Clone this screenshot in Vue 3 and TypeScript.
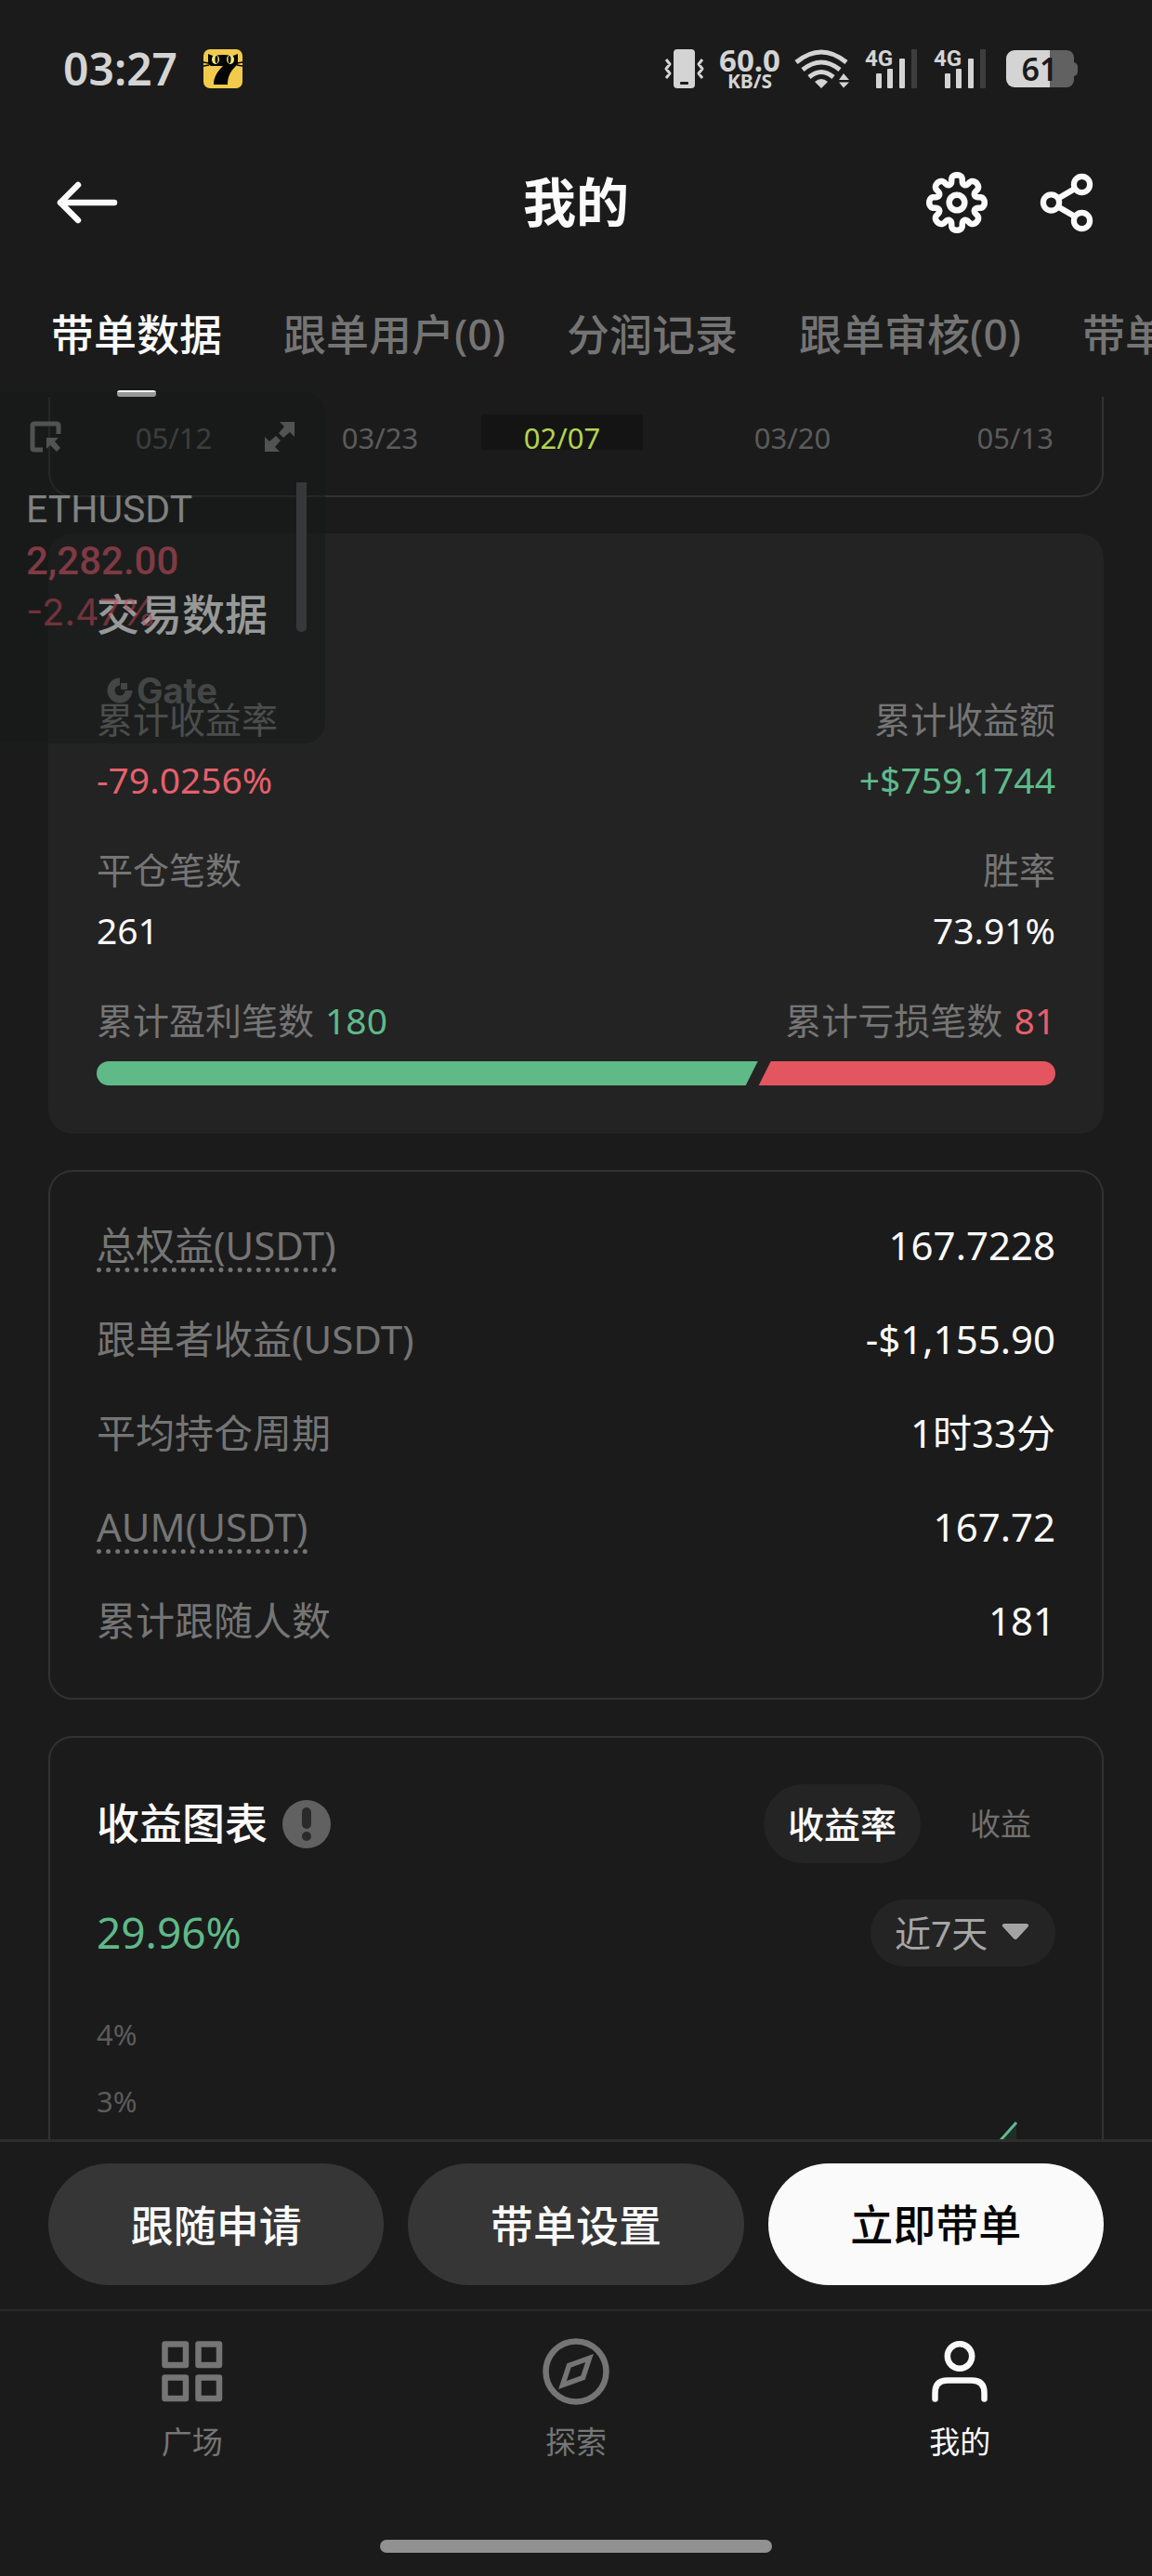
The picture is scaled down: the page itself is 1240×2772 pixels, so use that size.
<script setup lang="ts">
import { ref } from 'vue'

interface AxisDate { label: string; share: number; active?: boolean }
interface Detail { label: string; value: string; hint?: boolean }

const tabs: string[] = ['带单数据', '跟单用户(0)', '分润记录', '跟单审核(0)', '带单设置']
const activeTab = ref(0)

const dates: AxisDate[] = [
  { label: '05/12', share: 266 },
  { label: '03/23', share: 178 },
  { label: '02/07', share: 214, active: true },
  { label: '03/20', share: 282 },
  { label: '05/13', share: 192 },
]
const dateColumns = dates.map((d) => `${d.share}fr`).join(' ')

const details: Detail[] = [
  { label: '总权益(USDT)', value: '167.7228', hint: true },
  { label: '跟单者收益(USDT)', value: '-$1,155.90' },
  { label: '平均持仓周期', value: '1时33分' },
  { label: 'AUM(USDT)', value: '167.72', hint: true },
  { label: '累计跟随人数', value: '181' },
]

const levels: string[] = ['4%', '3%']
const metric = ref<'rate' | 'amount'>('rate')
const range = ref('7')

// Eight rounded teeth: the radius swings between the tips and the notches,
// and the angle is pushed outwards near a tip so that the teeth stay broad.
function gearPath(cx: number, cy: number, mid: number, swing: number): string {
  const steps = 160
  const points: string[] = []
  for (let i = 0; i < steps; i++) {
    const a = (i / steps) * Math.PI * 2
    const t = a + 0.035 * Math.sin(8 * a) + 0.04 * Math.sin(16 * a)
    const r = mid + swing * Math.cos(8 * a)
    points.push(`${(cx + r * Math.sin(t)).toFixed(2)} ${(cy - r * Math.cos(t)).toFixed(2)}`)
  }
  return `M${points.join('L')}Z`
}
const gear = gearPath(35, 35, 25.2, 4.6)
</script>

<template>
  <div class="app">
    <div class="status">
      <div class="status-left">
        <span class="clock">03:27</span>
        <svg class="cat" viewBox="0 0 42 42" aria-hidden="true">
          <rect width="42" height="42" rx="7" fill="#f2cb4d" />
          <path d="M5 5l5 2q11-2 22 0l5-2v11l-3 3c-6 6-8 12-8 19H11c0-8 4-14 10-20H8q-3-1-3-5z" fill="#050505" />
          <path d="M0 14l6 1M0 18l6-1M42 14l-6 1M42 18l-6-1" stroke="#050505" stroke-width="1.500" />
          <ellipse cx="13" cy="11" rx="4" ry="5" fill="#f1ea7a" />
          <ellipse cx="29" cy="11" rx="4" ry="5" fill="#f1ea7a" />
          <ellipse cx="14" cy="11" rx="1.500" ry="4" fill="#050505" />
          <ellipse cx="28" cy="11" rx="1.500" ry="4" fill="#050505" />
        </svg>
      </div>
      <div class="status-right">
        <svg class="vibrate" viewBox="0 0 43 42" aria-hidden="true">
          <rect x="10" width="23" height="42" rx="4" fill="#d4d4d4" />
          <rect x="17" y="35" width="9" height="3" rx="1" fill="#1b1b1b" />
          <path d="M2 11l4 5-4 5 4 5-4 5M41 11l-4 5 4 5-4 5 4 5" fill="none" stroke="#d4d4d4" stroke-width="3" stroke-linejoin="round" />
        </svg>
        <div class="speed"><b>60.0</b><small>KB/S</small></div>
        <svg class="wifi" viewBox="0 0 60 42" aria-hidden="true">
          <g fill="none" stroke="#d4d4d4" stroke-width="5">
            <path d="M2 14Q29-8 56 14" />
            <path d="M9 22Q29 6 49 22" />
            <path d="M16 30Q29 19 42 30" />
          </g>
          <path d="M22 35q7-6 14 0l-7 7z" fill="#d4d4d4" />
          <path d="M48 33l5-7 6 7zM48 35.500h11l-6 6z" fill="#d4d4d4" />
        </svg>
        <svg v-for="n in 2" :key="n" class="signal" viewBox="0 0 58 44" role="img" aria-label="4G">
          <text x="0" y="19" class="net">4G</text>
          <g fill="#d4d4d4">
            <rect x="12" y="27" width="6" height="16" rx="1" />
            <rect x="24" y="22" width="6" height="21" rx="1" />
            <rect x="37" y="11" width="6" height="32" rx="1" />
          </g>
          <rect x="50" y="1" width="6" height="42" fill="#3d3d3d" />
        </svg>
        <svg class="battery" viewBox="0 0 77 40" aria-hidden="true">
          <path d="M47 0h18a8 8 0 0 1 8 8v5q4 1 4 5v5q0 4-4 5v4a8 8 0 0 1-8 8H47z" fill="#616161" />
          <path d="M47 0H9a9 9 0 0 0-9 9v22a9 9 0 0 0 9 9h38z" fill="#d4d4d4" />
          <text x="36" y="33" text-anchor="middle" class="level">61</text>
        </svg>
      </div>
    </div>

    <header class="bar">
      <button class="icon-btn" aria-label="返回">
        <svg viewBox="0 0 70 70"><path d="M27 16L8 35l19 19M8 35h58" fill="none" stroke="#fafafa" stroke-width="6.500" stroke-linecap="round" stroke-linejoin="round" /></svg>
      </button>
      <h1>我的</h1>
      <div class="bar-actions">
        <button class="icon-btn" aria-label="设置">
          <svg viewBox="0 0 70 70" fill="none" stroke="#fafafa" stroke-width="6.500">
            <path :d="gear" stroke-linejoin="round" />
            <circle cx="35" cy="35" r="8.300" />
          </svg>
        </button>
        <button class="icon-btn" aria-label="分享">
          <svg viewBox="0 0 70 70" fill="none" stroke="#fafafa" stroke-width="6.200">
            <circle cx="18.500" cy="35" r="8.600" />
            <circle cx="51.500" cy="15.500" r="8.600" />
            <circle cx="51.500" cy="54.500" r="8.600" />
            <path d="M26 30.500l18-10.500M26 39.500L44 50" />
          </svg>
        </button>
      </div>
    </header>

    <nav class="tabs">
      <button v-for="(tab, i) in tabs" :key="tab" class="tab" :class="{ active: i === activeTab }" @click="activeTab = i">
        {{ tab }}
      </button>
    </nav>

    <main>
      <section class="card outlined dates-card">
        <div class="dates" :style="{ gridTemplateColumns: dateColumns }">
          <span v-for="d in dates" :key="d.label" class="date" :class="{ on: d.active }"><i>{{ d.label }}</i></span>
        </div>
      </section>

      <section class="card filled">
        <h2>交易数据</h2>
        <div class="pair">
          <div><p class="label">累计收益率</p><p class="value down">-79.0256%</p></div>
          <div><p class="label">累计收益额</p><p class="value up">+$759.1744</p></div>
        </div>
        <div class="pair">
          <div><p class="label">平仓笔数</p><p class="value">261</p></div>
          <div><p class="label">胜率</p><p class="value">73.91%</p></div>
        </div>
        <div class="pair tally">
          <p class="label">累计盈利笔数<span class="count up">180</span></p>
          <p class="label">累计亏损笔数<span class="count down">81</span></p>
        </div>
        <div class="ratio"><span class="win"></span><span class="loss"></span></div>
      </section>

      <section class="card outlined details-card">
        <dl>
          <div v-for="d in details" :key="d.label" class="detail">
            <dt><span :class="{ hint: d.hint }">{{ d.label }}</span></dt>
            <dd>{{ d.value }}</dd>
          </div>
        </dl>
      </section>

      <section class="card outlined">
        <div class="chart-head">
          <h2>收益图表</h2>
          <button class="info" aria-label="说明">
            <svg viewBox="0 0 52 52">
              <circle cx="26" cy="26" r="26" fill="#616161" />
              <rect x="21" y="8" width="10" height="23" rx="5" fill="#2a2a2a" />
              <circle cx="26" cy="39" r="5" fill="#2a2a2a" />
            </svg>
          </button>
          <div class="metrics">
            <button class="metric" :class="{ on: metric === 'rate' }" @click="metric = 'rate'">收益率</button>
            <button class="metric" :class="{ on: metric === 'amount' }" @click="metric = 'amount'">收益</button>
          </div>
        </div>
        <div class="chart-sub">
          <strong class="total up">29.96%</strong>
          <label class="range">
            <select v-model="range" aria-label="时间范围">
              <option value="7">近7天</option>
            </select>
            <svg viewBox="0 0 30 18" aria-hidden="true"><path d="M3 0h24q4 1 1 4L17 16q-2 2-4 0L2 4Q-1 1 3 0z" fill="#a3a3a3" /></svg>
          </label>
        </div>
        <div class="plot">
          <div class="levels"><span v-for="l in levels" :key="l">{{ l }}</span></div>
          <svg class="curve" viewBox="0 0 100 220" aria-hidden="true">
            <path d="M58 131L0 196V220H58z" fill="#1e2f27" />
            <path d="M58 131L0 196" stroke="#62b994" stroke-width="3" />
          </svg>
        </div>
      </section>
    </main>

    <footer>
      <div class="actions">
        <button>跟随申请</button>
        <button>带单设置</button>
        <button class="primary">立即带单</button>
      </div>
      <nav class="dock">
        <a href="#square">
          <svg viewBox="0 0 72 72" fill="none" stroke="currentColor" stroke-width="6.500" stroke-linejoin="round">
            <path d="M6.500 6.500H29v22.500H6.500zM42.500 6.500H65v22.500H42.500zM6.500 42.500H29V65H6.500zM42.500 42.500H65V65H42.500z" />
          </svg>
          <span>广场</span>
        </a>
        <a href="#explore">
          <svg viewBox="0 0 72 72" fill="none" stroke="currentColor">
            <circle cx="36" cy="36" r="32.500" stroke-width="6.500" />
            <path d="M50.500 21.500L43.500 42.500 21.500 50.500 28.500 29.500z" stroke-width="5.500" />
          </svg>
          <span>探索</span>
        </a>
        <a href="#me" class="current">
          <svg viewBox="0 0 72 72" fill="none" stroke="currentColor" stroke-width="6.500" stroke-linecap="round">
            <ellipse cx="36" cy="19.500" rx="13.200" ry="13.200" />
            <path d="M9.500 65.500V59Q9.500 45.500 23 45.500H49Q62.500 45.500 62.500 59V65.500" />
          </svg>
          <span>我的</span>
        </a>
      </nav>
      <div class="home"></div>
    </footer>

    <aside class="floating">
      <div class="float-tools">
        <svg viewBox="0 0 34 34" aria-hidden="true">
          <path d="M14 31H5q-2 0-2-2V5q0-2 2-2h24q2 0 2 2v9" fill="none" stroke="currentColor" stroke-width="5" />
          <path d="M18 18h13l-4 4 6 7-4 4-7-7-4 4z" fill="currentColor" />
        </svg>
        <svg viewBox="0 0 34 34" aria-hidden="true">
          <path d="M17 1h16v16l-5-5-7 6-5-5 6-7zM17 33H1V17l5 5 7-6 5 5-6 7z" fill="currentColor" />
        </svg>
      </div>
      <div class="quote">
        <div class="prices">
          <p class="symbol">ETHUSDT</p>
          <p class="last">2,282.00</p>
          <p class="change">-2.47%</p>
        </div>
        <div class="thumb"></div>
      </div>
      <div class="brand">
        <svg viewBox="0 0 28 28" aria-hidden="true">
          <path d="M14 4.500a9.500 9.500 0 1 0 9.500 9.500" fill="none" stroke="currentColor" stroke-width="8" />
          <path d="M15 6h7v7h-7z" fill="currentColor" />
        </svg>
        <span>Gate</span>
      </div>
    </aside>
  </div>
</template>

<style>
body {
  background: #1b1b1b;
}
</style>

<style scoped>
.app {
  position: relative;
  display: flex;
  flex-direction: column;
  height: 100vh;
  overflow: hidden;
  background: #1b1b1b;
  color: #fafafa;
  font-family: "Noto Sans", "Noto Sans CJK SC", sans-serif;
}
* {
  box-sizing: border-box;
}
svg {
  display: block;
}
button,
select {
  padding: 0;
  border: 0;
  background: none;
  color: inherit;
  font: inherit;
}
h1,
h2,
p,
dl,
dd {
  margin: 0;
}

.status {
  display: flex;
  flex: none;
  align-items: center;
  justify-content: space-between;
  height: 148px;
  padding: 0 80px 0 68px;
  color: #d4d4d4;
}
.status-left,
.status-right {
  display: flex;
  align-items: center;
}
.status-left {
  gap: 28px;
}
.clock {
  font-size: 48px;
  font-weight: 600;
  line-height: 60px;
}
.cat {
  width: 42px;
  height: 42px;
}
.vibrate {
  width: 43px;
  height: 42px;
}
.speed {
  display: flex;
  flex-direction: column;
  align-items: center;
  width: 70px;
  margin: 0 13px 0 14px;
  font-weight: 700;
}
.speed b {
  font-size: 33px;
  font-weight: 700;
  line-height: 25px;
}
.speed small {
  font-size: 21px;
  line-height: 20px;
}
.wifi {
  width: 60px;
  height: 42px;
}
.signal {
  width: 58px;
  height: 44px;
  margin-left: 16px;
  overflow: visible;
}
.net {
  fill: #d4d4d4;
  font-family: Roboto, sans-serif;
  font-size: 24px;
  font-weight: 700;
}
.battery {
  width: 77px;
  height: 40px;
  margin-left: 20px;
  overflow: visible;
}
.level {
  fill: #1b1b1b;
  font-size: 34px;
  font-weight: 600;
}

.bar {
  display: grid;
  flex: none;
  grid-template-columns: 1fr auto 1fr;
  align-items: center;
  height: 140px;
  padding: 0 57px;
}
h1 {
  padding-bottom: 3px;
  font-size: 57px;
  font-weight: 700;
  line-height: 80px;
}
.bar-actions {
  display: flex;
  justify-content: flex-end;
  gap: 48px;
}
.icon-btn,
.icon-btn svg {
  width: 70px;
  height: 70px;
}

.tabs {
  display: flex;
  flex: none;
  gap: 66px;
  padding: 41px 0 0 55px;
  overflow: hidden;
}
.tab {
  display: flex;
  flex: none;
  flex-direction: column;
  align-items: center;
  gap: 31px;
  color: #747474;
  font-size: 46px;
  font-weight: 500;
  line-height: 60px;
}
.tab::after {
  width: 42px;
  height: 7px;
  border-radius: 3px;
  content: "";
}
.tab.active {
  color: #fafafa;
}
.tab.active::after {
  background: #fafafa;
}

main {
  display: flex;
  flex: 1;
  flex-direction: column;
  gap: 39px;
  min-height: 0;
  padding: 0 52px;
  overflow: hidden;
}
.card {
  flex: none;
  padding: 52px;
  border-radius: 26px;
}
.outlined {
  padding: 50px;
  border: 2px solid #323232;
}
.filled {
  background: #232323;
}
.dates-card {
  padding: 19px 0 49px;
  border-top: 0;
  border-radius: 0 0 26px 26px;
}
.dates {
  display: grid;
}
.date {
  height: 38px;
  overflow: hidden;
  color: #5b5b5b;
  font-size: 31px;
  line-height: 50px;
  text-align: center;
}
.date:last-child {
  padding-right: 52px;
  text-align: right;
}
.date i {
  display: block;
  font-style: normal;
}
.date.on {
  margin: 0 20px;
  background: #141414;
  color: #b3d44d;
}

h2 {
  font-size: 46px;
  font-weight: 500;
  line-height: 68px;
}
.filled h2 {
  margin-bottom: 52px;
}
.pair {
  display: flex;
  justify-content: space-between;
  margin-bottom: 41px;
}
.pair > :last-child {
  text-align: right;
}
.pair.tally {
  margin-bottom: 16px;
}
.label,
.value {
  font-size: 39px;
  line-height: 56px;
}
.label {
  color: #757575;
}
.value {
  margin-top: 9px;
}
.count {
  margin-left: 12px;
}
.up {
  color: #5fb98a;
}
.down {
  color: #e4606c;
}
.ratio {
  display: flex;
  height: 26px;
  overflow: hidden;
  border-radius: 13px;
}
.win {
  flex: 711;
  background: #5fba87;
  clip-path: polygon(0 0, 100% 0, calc(100% - 13px) 100%, 0 100%);
}
.loss {
  flex: 320;
  background: #e3555f;
  clip-path: polygon(14px 0, 100% 0, 100% 100%, 1px 100%);
}

.details-card {
  padding: 48px 50px 52px;
}
dl {
  display: flex;
  flex-direction: column;
  gap: 39px;
}
.detail {
  display: flex;
  justify-content: space-between;
  height: 62px;
  font-size: 42px;
  line-height: 62px;
}
dt {
  color: #757575;
}
.hint {
  display: block;
  height: 60px;
  border-bottom: 5px dotted #757575;
}

.chart-head {
  display: flex;
  align-items: center;
  height: 85px;
}
.chart-head h2 {
  padding-bottom: 3px;
}
.info,
.info svg {
  width: 52px;
  height: 52px;
}
.info {
  margin-left: 16px;
}
.metrics {
  display: flex;
  gap: 27px;
  margin-left: auto;
}
.metric {
  height: 85px;
  padding: 0 26px 3px;
  border-radius: 43px;
  color: #707070;
  font-size: 33px;
}
.metric.on {
  background: #242424;
  color: #fafafa;
  font-size: 39px;
  font-weight: 500;
}
.chart-sub {
  display: flex;
  align-items: center;
  justify-content: space-between;
  margin-top: 39px;
}
.total {
  padding-bottom: 2px;
  font-size: 46px;
  font-weight: 400;
  line-height: 70px;
}
.range {
  position: relative;
}
.range select {
  display: block;
  height: 72px;
  padding: 0 72px 2px 26px;
  border-radius: 36px;
  background: #242424;
  color: #a6a6a6;
  font-size: 39px;
  appearance: none;
}
.range svg {
  position: absolute;
  top: 26px;
  right: 28px;
  width: 30px;
  height: 18px;
  pointer-events: none;
}
.plot {
  display: flex;
  justify-content: space-between;
  margin-top: 37px;
}
.levels {
  display: flex;
  flex-direction: column;
  color: #5b5b5b;
  font-size: 31px;
  line-height: 72px;
}
.curve {
  width: 100px;
  height: 220px;
}

footer {
  flex: none;
  background: #1b1b1b;
}
.actions {
  display: flex;
  gap: 26px;
  padding: 23px 52px 26px;
  border-top: 3px solid #2e2e2e;
}
.actions button {
  flex: 1;
  height: 131px;
  padding-bottom: 3px;
  border-radius: 66px;
  background: #363636;
  font-size: 46px;
  font-weight: 500;
}
.actions .primary {
  padding-bottom: 6px;
  background: #fafafa;
  color: #050505;
}
.dock {
  display: flex;
  padding-top: 29px;
  border-top: 2px solid #2a2a2a;
}
.dock a {
  display: flex;
  flex: 1;
  flex-direction: column;
  gap: 18px;
  align-items: center;
  color: #757575;
  font-size: 33px;
  line-height: 44px;
  text-decoration: none;
}
.dock svg {
  width: 72px;
  height: 72px;
}
.dock .current {
  color: #fafafa;
}
.home {
  width: 34%;
  height: 14px;
  margin: 83px auto 25px;
  border-radius: 7px;
  background: #919191;
}

.floating {
  position: absolute;
  top: 422px;
  left: 0;
  width: 350px;
  padding: 31px 20px 38px 28px;
  border-radius: 0 22px 22px 0;
  background: rgba(22, 26, 24, 0.43);
  color: #505352;
}
.float-tools {
  display: flex;
  justify-content: space-between;
  padding: 0 12px 0 4px;
}
.float-tools svg {
  width: 34px;
  height: 34px;
}
.quote {
  display: flex;
  justify-content: space-between;
  margin-top: 32px;
  font-family: Roboto, "Noto Sans", sans-serif;
  line-height: 55px;
}
.prices {
  padding-top: 2px;
}
.symbol {
  color: #7f8180;
  font-size: 41px;
}
.last {
  color: #7f3a43;
  font-size: 42px;
  font-weight: 500;
}
.change {
  color: rgba(190, 70, 86, 0.55);
  font-family: Inter, sans-serif;
  font-size: 40px;
}
.thumb {
  width: 11px;
  height: 161px;
  border-radius: 0 0 5px 5px;
  background: #37383a;
}
.brand {
  display: flex;
  gap: 4px;
  align-items: center;
  margin: 38px 0 0 87px;
  color: #434644;
  font-family: Inter, sans-serif;
  font-size: 38px;
  font-weight: 700;
  line-height: 38px;
}
.brand svg {
  width: 28px;
  height: 28px;
}
</style>
